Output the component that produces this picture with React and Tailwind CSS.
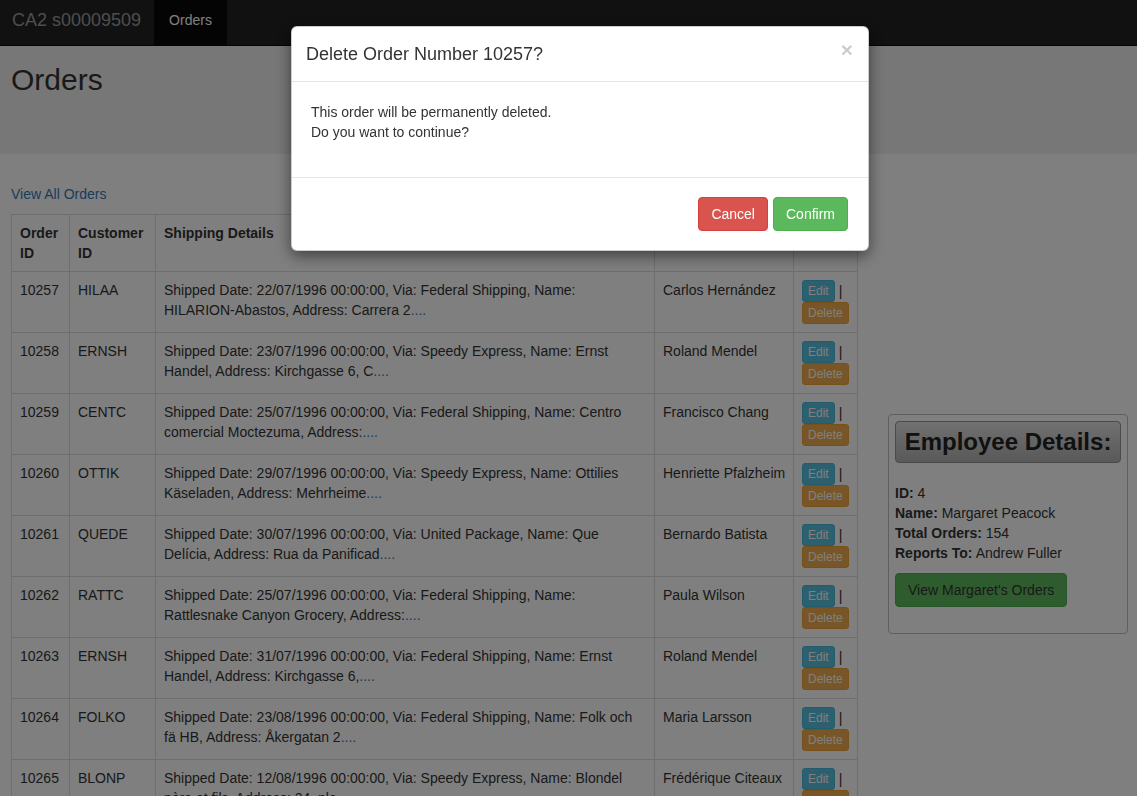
import React from "react";

const orders = [
  { id: 10257, cust: "HILAA", text: "Shipped Date: 22/07/1996 00:00:00, Via: Federal Shipping, Name: HILARION-Abastos, Address: Carrera 2", emp: "Carlos Hernández" },
  { id: 10258, cust: "ERNSH", text: "Shipped Date: 23/07/1996 00:00:00, Via: Speedy Express, Name: Ernst Handel, Address: Kirchgasse 6, C", emp: "Roland Mendel" },
  { id: 10259, cust: "CENTC", text: "Shipped Date: 25/07/1996 00:00:00, Via: Federal Shipping, Name: Centro comercial Moctezuma, Address:", emp: "Francisco Chang" },
  { id: 10260, cust: "OTTIK", text: "Shipped Date: 29/07/1996 00:00:00, Via: Speedy Express, Name: Ottilies Käseladen, Address: Mehrheime", emp: "Henriette Pfalzheim" },
  { id: 10261, cust: "QUEDE", text: "Shipped Date: 30/07/1996 00:00:00, Via: United Package, Name: Que Delícia, Address: Rua da Panificad", emp: "Bernardo Batista" },
  { id: 10262, cust: "RATTC", text: "Shipped Date: 25/07/1996 00:00:00, Via: Federal Shipping, Name: Rattlesnake Canyon Grocery, Address:", emp: "Paula Wilson" },
  { id: 10263, cust: "ERNSH", text: "Shipped Date: 31/07/1996 00:00:00, Via: Federal Shipping, Name: Ernst Handel, Address: Kirchgasse 6,", emp: "Roland Mendel" },
  { id: 10264, cust: "FOLKO", text: "Shipped Date: 23/08/1996 00:00:00, Via: Federal Shipping, Name: Folk och fä HB, Address: Åkergatan 2", emp: "Maria Larsson" },
  { id: 10265, cust: "BLONP", text: "Shipped Date: 12/08/1996 00:00:00, Via: Speedy Express, Name: Blondel père et fils, Address: 24, pla", emp: "Frédérique Citeaux" },
];

const cell = "border border-[#ddd] p-[8px] align-top";

export default function App() {
  return (
    <div className="relative h-[796px] overflow-hidden bg-white font-['Liberation_Sans',Arial,sans-serif] text-[14px] leading-[20px] text-[#333]">
      {/* Navbar */}
      <nav className="flex h-[46px] border-b border-[#080808] bg-[#222]">
        <a className="pl-[12px] pr-[13px] pt-[10px] text-[18px] leading-[20px] text-[#9d9d9d]">CA2 s00009509</a>
        <a className="bg-[#080808] px-[15px] pt-[10px] text-white">Orders</a>
      </nav>

      {/* Jumbotron */}
      <div className="h-[108px] bg-[#eee] px-[11px] pt-[17px]">
        <h2 className="text-[30px] leading-[33px]">Orders</h2>
      </div>

      <div className="flex gap-[31px] px-[11px] pt-[30px]">
        <div className="w-[846px] shrink-0">
          <a className="block text-[#337ab7]">View All Orders</a>
          <table className="mt-[10px] w-[846px] table-fixed border-collapse border border-[#ddd]">
            <colgroup>
              <col className="w-[58px]" />
              <col className="w-[86px]" />
              <col className="w-[499px]" />
              <col className="w-[139px]" />
              <col className="w-[64px]" />
            </colgroup>
            <thead>
              <tr className="text-left">
                <th className={cell}>Order ID</th>
                <th className={cell}>Customer ID</th>
                <th className={cell}>Shipping Details</th>
                <th className={cell}>Employee</th>
                <th className={cell}>Action</th>
              </tr>
            </thead>
            <tbody>
              {orders.map((o) => (
                <tr key={o.id}>
                  <td className={cell}>{o.id}</td>
                  <td className={cell}>{o.cust}</td>
                  <td className={cell}>
                    {o.text}
                    <a className="text-[#337ab7]">....</a>
                  </td>
                  <td className={`${cell} whitespace-nowrap`}>{o.emp}</td>
                  <td className={cell}>
                    <div className="flex items-center gap-[4px]">
                      <button className="h-[22px] rounded-[3px] border border-[#46b8da] bg-[#5bc0de] px-[5px] text-[12px] leading-[18px] text-white">
                        Edit
                      </button>
                      <span>|</span>
                    </div>
                    <button className="h-[22px] rounded-[3px] border border-[#eea236] bg-[#f0ad4e] px-[5px] text-[12px] leading-[18px] text-white">
                      Delete
                    </button>
                  </td>
                </tr>
              ))}
            </tbody>
          </table>
        </div>

        {/* Employee panel */}
        <div className="mt-[230px] h-[220px] w-[240px] shrink-0 rounded-[4px] border border-[#bfbfbf] p-[6px]">
          <div className="flex h-[42px] items-center justify-center rounded-[4px] border border-[#959595] bg-gradient-to-b from-[#e2e2e2] to-[#b2b2b2] text-[24px] font-bold text-[#222]">
            Employee Details:
          </div>
          <div className="mt-[20px]">
            <div><b>ID:</b> 4</div>
            <div><b>Name:</b> Margaret Peacock</div>
            <div><b>Total Orders:</b> 154</div>
            <div><b>Reports To:</b> Andrew Fuller</div>
          </div>
          <button className="mt-[10px] h-[34px] rounded-[4px] border border-[#4cae4c] bg-[#5cb85c] px-[12px] text-[#333]">
            View Margaret's Orders
          </button>
        </div>
      </div>

      {/* Backdrop */}
      <div className="fixed inset-0 bg-black/50" />

      {/* Modal */}
      <div className="fixed left-[291px] top-[26px] w-[578px] rounded-[6px] border border-black/20 bg-white shadow-[0_5px_15px_rgba(0,0,0,0.5)]">
        <div className="relative border-b border-[#e5e5e5] px-[14px] pb-[14px] pt-[14px]">
          <h4 className="text-[18px] leading-[26px]">Delete Order Number 10257?</h4>
          <span className="absolute right-[15px] top-[12px] text-[21px] font-bold leading-[21px] text-black opacity-20">×</span>
        </div>
        <div className="px-[19px] pb-[35px] pt-[20px]">
          <p>This order will be permanently deleted.</p>
          <p>Do you want to continue?</p>
        </div>
        <div className="flex justify-end gap-[5px] border-t border-[#e5e5e5] pb-[19px] pl-[20px] pr-[20px] pt-[19px]">
          <button className="h-[34px] rounded-[4px] border border-[#d43f3a] bg-[#d9534f] px-[12px] text-white">Cancel</button>
          <button className="h-[34px] rounded-[4px] border border-[#4cae4c] bg-[#5cb85c] px-[12px] text-white">Confirm</button>
        </div>
      </div>
    </div>
  );
}
